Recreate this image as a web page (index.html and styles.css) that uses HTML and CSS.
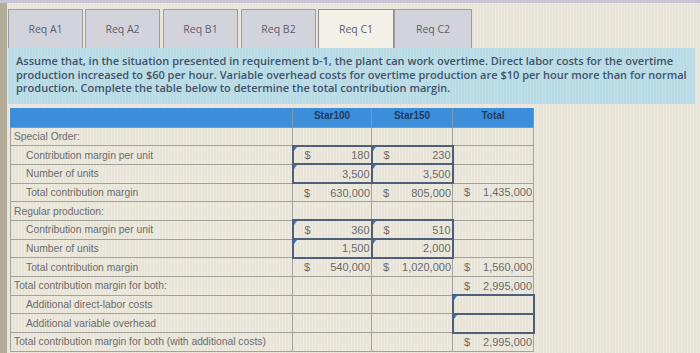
FILE: index.html
```html
<!DOCTYPE html>
<html>
<head>
<meta charset="utf-8">
<link rel="stylesheet" href="styles.css">
</head>
<body>
<div class="topbar"></div>
<div class="frame">
  <nav class="tabs">
    <div class="tab">Req A1</div>
    <div class="tab">Req A2</div>
    <div class="tab">Req B1</div>
    <div class="tab">Req B2</div>
    <div class="tab active">Req C1</div>
    <div class="tab">Req C2</div>
  </nav>
  <section class="prompt">
    <p>Assume that, in the situation presented in requirement b-1, the plant can work overtime. Direct labor costs for the overtime<br>production increased to $60 per hour. Variable overhead costs for overtime production are $10 per hour more than for normal<br>production. Complete the table below to determine the total contribution margin.</p>
  </section>
  <table class="grid">
    <colgroup>
      <col class="c-label"><col class="c-a"><col class="c-b"><col class="c-c">
    </colgroup>
    <thead>
      <tr><th></th><th>Star100</th><th>Star150</th><th>Total</th></tr>
    </thead>
    <tbody>
      <tr><td class="lbl">Special Order:</td><td></td><td></td><td></td></tr>
      <tr><td class="lbl ind">Contribution margin per unit</td>
        <td class="inp"><div class="money"><span>$</span><span>180</span></div></td>
        <td class="inp"><div class="money"><span>$</span><span>230</span></div></td>
        <td></td></tr>
      <tr><td class="lbl ind">Number of units</td>
        <td class="inp"><div class="money"><span></span><span>3,500</span></div></td>
        <td class="inp"><div class="money"><span></span><span>3,500</span></div></td>
        <td></td></tr>
      <tr><td class="lbl ind">Total contribution margin</td>
        <td><div class="money"><span>$</span><span>630,000</span></div></td>
        <td><div class="money"><span>$</span><span>805,000</span></div></td>
        <td><div class="money"><span>$</span><span>1,435,000</span></div></td></tr>
      <tr><td class="lbl">Regular production:</td><td></td><td></td><td></td></tr>
      <tr><td class="lbl ind">Contribution margin per unit</td>
        <td class="inp"><div class="money"><span>$</span><span>360</span></div></td>
        <td class="inp"><div class="money"><span>$</span><span>510</span></div></td>
        <td></td></tr>
      <tr><td class="lbl ind">Number of units</td>
        <td class="inp"><div class="money"><span></span><span>1,500</span></div></td>
        <td class="inp"><div class="money"><span></span><span>2,000</span></div></td>
        <td></td></tr>
      <tr><td class="lbl ind">Total contribution margin</td>
        <td><div class="money"><span>$</span><span>540,000</span></div></td>
        <td><div class="money"><span>$</span><span>1,020,000</span></div></td>
        <td class="tot"><div class="money"><span>$</span><span>1,560,000</span></div></td></tr>
      <tr><td class="lbl">Total contribution margin for both:</td><td></td><td></td>
        <td class="tot"><div class="money"><span>$</span><span>2,995,000</span></div></td></tr>
      <tr><td class="lbl ind">Additional direct-labor costs</td><td></td><td></td>
        <td class="inp"></td></tr>
      <tr><td class="lbl ind">Additional variable overhead</td><td></td><td></td>
        <td class="inp"></td></tr>
      <tr><td class="lbl">Total contribution margin for both (with additional costs)</td><td></td><td></td>
        <td class="tot"><div class="money"><span>$</span><span>2,995,000</span></div></td></tr>
    </tbody>
  </table>
</div>
</body>
</html>
```

FILE: styles.css
```css
* { box-sizing: border-box; }
html, body { margin: 0; padding: 0; }
body {
  width: 700px;
  height: 353px;
  overflow: hidden;
  background-color: #e8e4d8;
  background-image: repeating-linear-gradient(90deg, rgba(255,255,255,0.22) 0 1px, transparent 1px 3px);
  font-family: "Liberation Sans", Arial, sans-serif;
}
.topbar {
  height: 3px;
  background: #c8c4d6;
}
.frame {
  border-left: 7px solid #b3ac99;
  padding-left: 1px;
  height: 350px;
}
.tabs {
  display: flex;
  gap: 2px;
  padding-top: 6px;
  height: 45px;
}
.tab {
  width: 75px;
  display: flex;
  align-items: center;
  justify-content: center;
  background: #d3d3db;
  border: 1px solid #9d9ca6;
  border-bottom: none;
  font-family: "Open Sans", sans-serif;
  font-size: 10.5px;
  color: #596070;
}
.tab:nth-child(3) { margin-left: 1px; }
.tab:nth-child(4) { margin-left: 1px; }
.tab.active {
  width: 76px;
  background: #f3f0e8;
  border-color: #8e8e96;
  margin-right: -2px;
}
.tab:last-child { width: 78px; }
.prompt {
  width: 687px;
  height: 56px;
  background-color: #b8dbe6;
  background-image: repeating-linear-gradient(90deg, rgba(255,255,255,0.12) 0 1px, transparent 1px 3px);
  padding: 6px 0 0 8px;
}
.prompt p {
  margin: 0;
  font-family: "Open Sans", sans-serif;
  font-weight: 600;
  font-size: 11px;
  line-height: 13.7px;
  color: #3f5369;
  white-space: nowrap;
}
.grid {
  margin: 4px 0 0 2px;
  border-collapse: collapse;
  table-layout: fixed;
  width: 523px;
}
.c-label { width: 282px; }
.c-a { width: 79px; }
.c-b { width: 81px; }
.c-c { width: 81px; }
.grid th {
  height: 19px;
  background: #3c8edb;
  border: 1px solid #7d97b0;
  border-top: none;
  font-size: 10px;
  font-weight: bold;
  color: #1e3c64;
  padding: 0 0 3px;
  vertical-align: middle;
}
.grid th:first-child { border-left: 1px solid #3c8edb; }
.grid td {
  height: 18.7px;
  border: 1px solid #a3a19b;
  padding: 0;
  font-size: 10.3px;
  color: #6c6c6c;
  vertical-align: middle;
  position: relative;
}
.lbl { padding-left: 3px !important; }
.lbl.ind { padding-left: 15px !important; }
.money {
  display: flex;
  justify-content: space-between;
  padding: 0 1px 0 11px;
  font-size: 11px;
  color: #6a6a6a;
}
td.inp {
  border: 2px solid #4e6079;
}
td.inp::before {
  content: "";
  position: absolute;
  left: 0;
  top: 0;
  border-top: 4px solid #3f78c8;
  border-right: 3px solid transparent;
}
td.tot { border-left: 1px solid #7a7a7a; }
```
